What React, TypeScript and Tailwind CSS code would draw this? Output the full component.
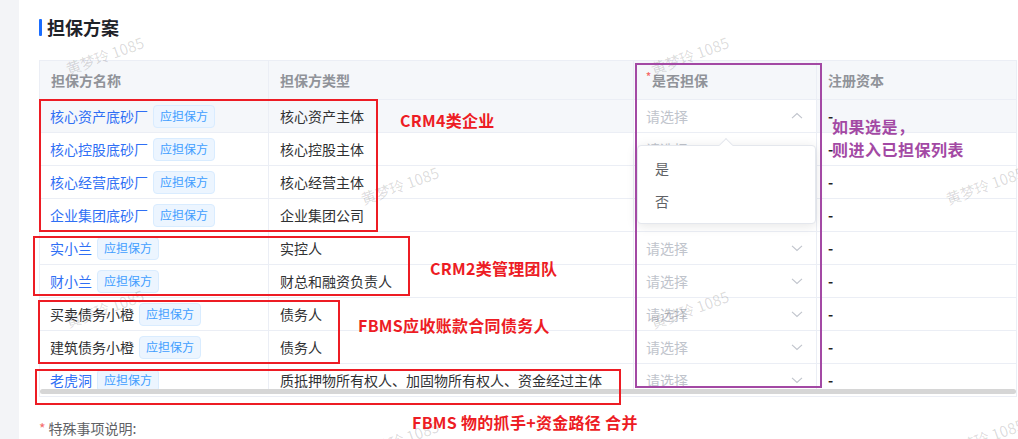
import React from "react";

type Row = { name: string; link: boolean; type: string; up?: boolean };

const rows: Row[] = [
  { name: "核心资产底砂厂", link: true, type: "核心资产主体", up: true },
  { name: "核心控股底砂厂", link: true, type: "核心控股主体" },
  { name: "核心经营底砂厂", link: true, type: "核心经营主体" },
  { name: "企业集团底砂厂", link: true, type: "企业集团公司" },
  { name: "实小兰", link: true, type: "实控人" },
  { name: "财小兰", link: true, type: "财总和融资负责人" },
  { name: "买卖债务小橙", link: false, type: "债务人" },
  { name: "建筑债务小橙", link: false, type: "债务人" },
  { name: "老虎洞", link: true, type: "质抵押物所有权人、加固物所有权人、资金经过主体" },
];

function Chevron({ up }: { up?: boolean }) {
  return (
    <svg width="12" height="12" viewBox="0 0 12 12" fill="none">
      {up ? (
        <path d="M1 8.2 L6 3.6 L11 8.2" stroke="#c0c4cc" strokeWidth="1.1" />
      ) : (
        <path d="M1 3.8 L6 8.4 L11 3.8" stroke="#c0c4cc" strokeWidth="1.1" />
      )}
    </svg>
  );
}

function Tag() {
  return (
    <span className="ml-[5px] inline-flex h-[23px] items-center rounded-[4px] border border-[#d9ecff] bg-[#ecf5ff] px-[6px] text-[12px] text-[#409eff]">
      应担保方
    </span>
  );
}

function Watermark({ className }: { className: string }) {
  return (
    <span
      className={
        "pointer-events-none absolute -translate-x-1/2 -translate-y-1/2 rotate-[-20deg] whitespace-nowrap text-[15px] text-black/[0.15] " +
        className
      }
    >
      黄梦玲 1085
    </span>
  );
}

export default function App() {
  return (
    <div className="relative flex h-[439px] w-[1018px] overflow-hidden bg-white font-['Noto_Sans_CJK_SC','Liberation_Sans',sans-serif]">
      <div className="w-[19px] shrink-0 bg-[#f3f4f7]" />
      <div className="flex flex-1 flex-col pl-[20px] pt-[16px]">
        <div className="flex h-[22px] items-center">
          <div className="h-[17px] w-[3px] rounded-[1px] bg-[#1a6dff]" />
          <div className="ml-[5px] text-[18px] font-bold leading-[22px] text-[#1f2329]">担保方案</div>
        </div>

        <div className="mt-[22px] w-[978px] border-l border-t border-[#ebeef5]">
          <div className="flex h-[39px] border-b border-[#ebeef5] bg-[#f5f7fa] text-[14px] font-semibold text-[#909399]">
            <div className="flex w-[229px] items-center border-r border-[#ebeef5] pl-[11px]">担保方名称</div>
            <div className="flex w-[365px] items-center border-r border-[#ebeef5] pl-[11px]">担保方类型</div>
            <div className="flex w-[183px] items-center border-r border-[#ebeef5] pl-[12px]">
              <span className="mr-[1px] self-start pt-[10px] text-[10px] leading-[10px] text-[#f56c6c]">*</span>
              是否担保
            </div>
            <div className="flex w-[200px] items-center border-r border-[#ebeef5] pl-[11px]">注册资本</div>
          </div>

          <div className="h-[289px] overflow-hidden">
            {rows.map((r, i) => (
              <div
                key={i}
                className={
                  "flex h-[33px] border-b border-[#ebeef5] text-[14px] " +
                  (i === 0 ? "bg-[#f5f7fa]" : "bg-white")
                }
              >
                <div className="flex w-[229px] items-center border-r border-[#ebeef5] pl-[10px]">
                  <span className={r.link ? "text-[#2f6ff5]" : "text-[#303133]"}>{r.name}</span>
                  <Tag />
                </div>
                <div className="flex w-[365px] items-center border-r border-[#ebeef5] pl-[11px] text-[#303133]">
                  {r.type}
                </div>
                <div className="flex w-[183px] items-center justify-between border-r border-[#ebeef5] bg-white pl-[12px] pr-[13px]">
                  <span className="text-[#c0c4cc]">请选择</span>
                  <Chevron up={r.up} />
                </div>
                <div className="flex w-[200px] items-center border-r border-[#ebeef5] pl-[11px] font-bold text-[#222]">
                  -
                </div>
              </div>
            ))}
          </div>
          <div className="h-[8px] border-b border-r border-[#ebeef5]">
            <div className="h-[5px] rounded-full bg-[#d6d6d6]" />
          </div>
        </div>

        <div className="mt-[21px] flex text-[14px] leading-[20px] text-[#606266]">
          <span className="mr-[3px] text-[#f56c6c]">*</span>
          <span>特殊事项说明:</span>
        </div>
      </div>

      {/* dropdown popper */}
      <div className="absolute left-[637px] top-[145px] h-[79px] w-[179px] rounded-[4px] border border-[#e4e7ed] bg-white py-[6px] shadow-[0_2px_12px_rgba(0,0,0,0.1)]">
        <div className="absolute left-[83px] top-[-6px] h-[10px] w-[10px] rotate-45 border-l border-t border-[#e4e7ed] bg-white" />
        <div className="flex h-[33px] items-center pl-[17px] text-[14px] text-[#606266]">是</div>
        <div className="flex h-[33px] items-center pl-[17px] text-[14px] text-[#606266]">否</div>
      </div>

      {/* watermarks */}
      <Watermark className="left-[105px] top-[56px]" />
      <Watermark className="left-[690px] top-[56px]" />
      <Watermark className="left-[400px] top-[186px]" />
      <Watermark className="left-[985px] top-[186px]" />
      <Watermark className="left-[105px] top-[309px]" />
      <Watermark className="left-[690px] top-[310px]" />
      <Watermark className="left-[400px] top-[440px]" />
      <Watermark className="left-[985px] top-[438px]" />

      {/* annotation boxes */}
      <div className="pointer-events-none absolute left-[39px] top-[99px] h-[133px] w-[339px] border-2 border-[#ed1c24]" />
      <div className="pointer-events-none absolute left-[33px] top-[236px] h-[60px] w-[377px] border-2 border-[#ed1c24]" />
      <div className="pointer-events-none absolute left-[38px] top-[300px] h-[64px] w-[302px] border-2 border-[#ed1c24]" />
      <div className="pointer-events-none absolute left-[35px] top-[369px] h-[36px] w-[586px] border-2 border-[#ed1c24]" />
      <div className="pointer-events-none absolute left-[635px] top-[63px] h-[325px] w-[187px] border-2 border-[#a349a4]" />

      {/* annotation texts */}
      <div className="absolute left-[400px] top-[110px] whitespace-nowrap text-[16px] font-bold leading-[20px] tracking-[0.3px] text-[#ed1c24]">CRM4类企业</div>
      <div className="absolute left-[430px] top-[258px] whitespace-nowrap text-[16px] font-bold leading-[20px] tracking-[0.3px] text-[#ed1c24]">CRM2类管理团队</div>
      <div className="absolute left-[358px] top-[315px] whitespace-nowrap text-[16px] font-bold leading-[20px] tracking-[0.3px] text-[#ed1c24]">FBMS应收账款合同债务人</div>
      <div className="absolute left-[412px] top-[412px] whitespace-nowrap text-[16px] font-bold leading-[20px] tracking-[0.3px] text-[#ed1c24]">FBMS 物的抓手+资金路径 合并</div>
      <div className="absolute left-[832px] top-[115px] whitespace-nowrap text-[16px] font-bold leading-[23px] tracking-[0.5px] text-[#a349a4]">
        <div>如果选是，</div>
        <div>则进入已担保列表</div>
      </div>
    </div>
  );
}
